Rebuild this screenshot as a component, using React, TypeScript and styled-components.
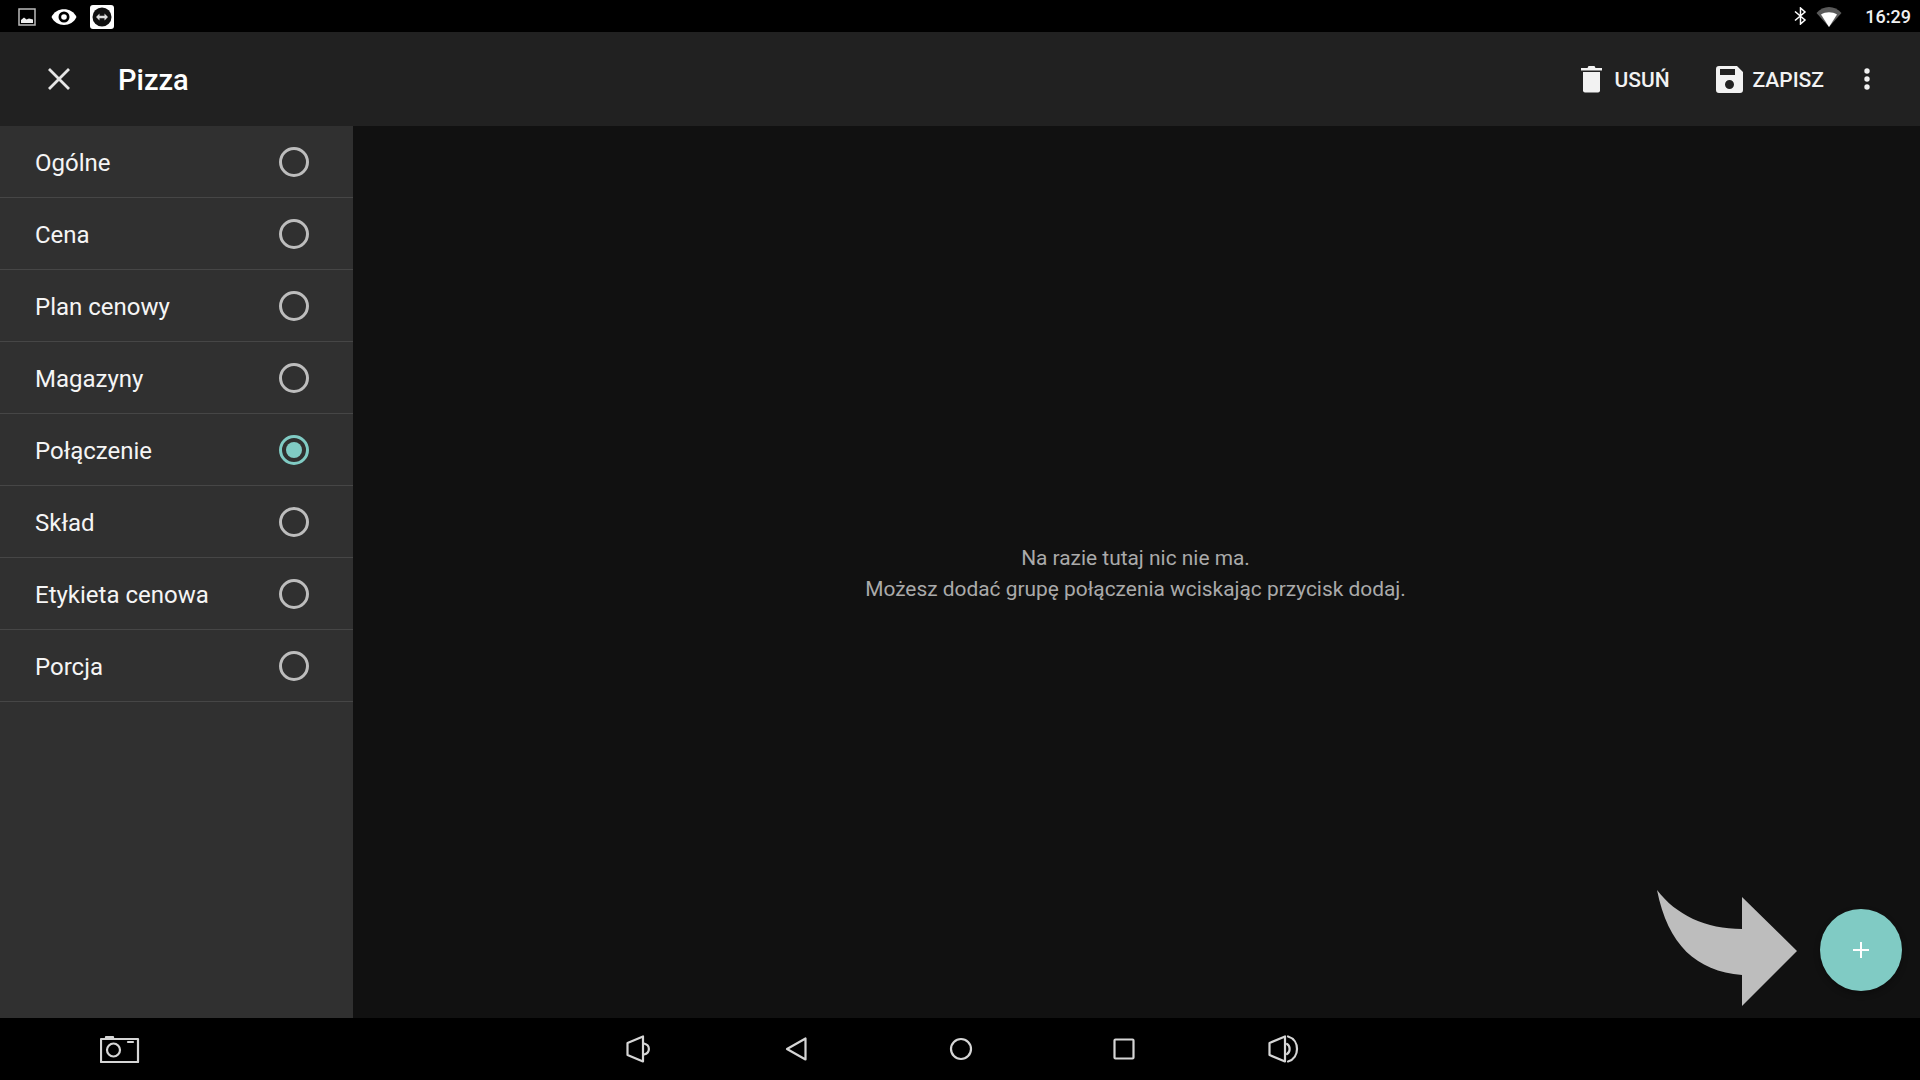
import styled, { createGlobalStyle } from "styled-components";

const GlobalStyle = createGlobalStyle`
  html, body {
    margin: 0;
    padding: 0;
    background: #000;
    font-family: Roboto, "Liberation Sans", sans-serif;
  }
`;

const SECTIONS = ["Ogólne", "Cena", "Plan cenowy", "Magazyny", "Połączenie", "Skład", "Etykieta cenowa", "Porcja"];
const ACTIVE_SECTION = "Połączenie";

const App = () => {
  return (
    <Screen>
      <GlobalStyle />
      <StatusBar>
        <NotificationIcons>
          <PictureIcon />
          <EyeIcon />
          <RemoteIcon />
        </NotificationIcons>
        <SystemIcons>
          <BluetoothIcon />
          <WifiIcon />
          <Clock>16:29</Clock>
        </SystemIcons>
      </StatusBar>

      <Toolbar>
        <CloseIcon />
        <Title>Pizza</Title>
        <Spacer />
        <ActionButton $gap={12}>
          <TrashIcon />
          <ActionLabel>USUŃ</ActionLabel>
        </ActionButton>
        <ActionButton $gap={10}>
          <SaveIcon />
          <ActionLabel>ZAPISZ</ActionLabel>
        </ActionButton>
        <MoreIcon />
      </Toolbar>

      <Body>
        <Sidebar>
          {SECTIONS.map(name => (
            <Row key={name}>
              <RowLabel>{name}</RowLabel>
              <Radio $checked={name === ACTIVE_SECTION} />
            </Row>
          ))}
        </Sidebar>
        <Main>
          <EmptyText>
            Na razie tutaj nic nie ma.
            <br />
            Możesz dodać grupę połączenia wciskając przycisk dodaj.
          </EmptyText>
          <HintArrow viewBox="0 0 142 118" width="142" height="118">
            <path d="M1 1 C 20 26 50 40 86 40 L86 8 L141 62 L86 117 L86 86 C 40 82 12 56 1 1 Z" fill="#bdbdbd" />
          </HintArrow>
          <Fab>
            <svg viewBox="0 0 16 16" width="16" height="16">
              <path d="M8 0V16M0 8H16" stroke="#fff" strokeWidth="2" fill="none" />
            </svg>
          </Fab>
        </Main>
      </Body>

      <NavBar>
        <NavIcon $left={100} viewBox="0 0 40 28" width="40" height="28">
          <rect x="1" y="4" width="37" height="23" />
          <path d="M6 3.5V2H13V3.5" />
          <circle cx="13.5" cy="15" r="6.5" />
          <path d="M28 7H33" />
        </NavIcon>
        <NavIcon $left={486} viewBox="0 0 26 28" width="26" height="28">
          <path d="M1.5 8L17 1.5V26.5L1.5 20Z" />
          <path d="M18 8.5C24.5 10 24.5 18 18 19.5" />
        </NavIcon>
        <NavIcon $left={133} viewBox="0 0 22 24" width="22" height="24">
          <path d="M2 12L20.5 1.5V22.5Z" />
        </NavIcon>
        <NavIcon $left={142} viewBox="0 0 24 24" width="24" height="24">
          <circle cx="12" cy="12" r="10" />
        </NavIcon>
        <NavIcon $left={140} viewBox="0 0 22 22" width="22" height="22">
          <rect x="1.5" y="1.5" width="19" height="19" rx="1" />
        </NavIcon>
        <NavIcon $left={133} viewBox="0 0 32 28" width="32" height="28">
          <path d="M1.5 8L17 1.5V26.5L1.5 20Z" />
          <path d="M19 9C22.5 11 22.5 17 19 19" />
          <path d="M20 1.5C32 5 32 23 20 26.5" />
        </NavIcon>
      </NavBar>
    </Screen>
  );
};

export default App;

const PictureIcon = () => (
  <svg viewBox="0 0 18 18" width="18" height="18">
    <rect x="1" y="1" width="16" height="16" fill="none" stroke="#bbb" strokeWidth="1.5" />
    <path d="M3 15V12L6 9.5L8.5 11.5L11 10.5L15 11.5V15Z" fill="#eee" />
  </svg>
);

const EyeIcon = () => (
  <EyeSvg viewBox="0 0 26 16" width="26" height="16">
    <path d="M0.5 8C5 -2.5 21 -2.5 25.5 8C21 18.5 5 18.5 0.5 8Z" fill="#fff" />
    <circle cx="13" cy="8" r="5.5" fill="#000" />
    <circle cx="13" cy="8" r="2.8" fill="#fff" />
  </EyeSvg>
);

const RemoteIcon = () => (
  <svg viewBox="0 0 24 24" width="24" height="24">
    <rect width="24" height="24" rx="3" fill="#fff" />
    <circle cx="12" cy="12" r="9.5" fill="#111" />
    <path d="M6 12L9.5 8.5V10.8H14.5V8.5L18 12L14.5 15.5V13.2H9.5V15.5Z" fill="#ddd" />
  </svg>
);

const BluetoothIcon = () => (
  <svg viewBox="0 0 13 18" width="13" height="18">
    <path d="M1 4.5L11 13L6.5 17V1L11 5L1 13.5" fill="none" stroke="#fff" strokeWidth="1.5" />
  </svg>
);

const WifiIcon = () => (
  <svg viewBox="0 0 26 21" width="26" height="21">
    <path d="M0.5 7C7 -1 19 -1 25.5 7L13 21Z" fill="#5a5a5a" />
    <path d="M5 8.5C9.5 5.5 16.5 5.5 21 8.5L13 21Z" fill="#fff" />
  </svg>
);

const CloseIcon = () => (
  <CloseSvg viewBox="0 0 24 24" width="24" height="24">
    <path d="M2 2L22 22M22 2L2 22" stroke="#e6e6e6" strokeWidth="2.8" fill="none" />
  </CloseSvg>
);

const TrashIcon = () => (
  <svg viewBox="0 0 21 28" width="21" height="28">
    <path d="M0 3H6.5L7.5 1H13.5L14.5 3H21V5.5H0Z" fill="#f2f2f2" />
    <path d="M2 7H19V25.5A2 2 0 0 1 17 27.5H4A2 2 0 0 1 2 25.5Z" fill="#f2f2f2" />
  </svg>
);

const SaveIcon = () => (
  <svg viewBox="0 0 27 27" width="27" height="27">
    <path
      fillRule="evenodd"
      d="M3 0H21L27 6V24A3 3 0 0 1 24 27H3A3 3 0 0 1 0 24V3A3 3 0 0 1 3 0ZM4 3V9H19V3ZM13.5 14A4.5 4.5 0 1 0 13.5 23A4.5 4.5 0 1 0 13.5 14Z"
      fill="#f2f2f2"
    />
  </svg>
);

const MoreIcon = () => (
  <MoreSvg viewBox="0 0 6 22" width="6" height="22">
    <circle cx="3" cy="3" r="2.7" fill="#f2f2f2" />
    <circle cx="3" cy="11" r="2.7" fill="#f2f2f2" />
    <circle cx="3" cy="19" r="2.7" fill="#f2f2f2" />
  </MoreSvg>
);

const Screen = styled.div`
  width: 1920px;
  height: 1080px;
  display: flex;
  flex-direction: column;
  overflow: hidden;
  background: #000;
`;

const StatusBar = styled.div`
  height: 32px;
  flex: none;
  display: flex;
  align-items: center;
  justify-content: space-between;
  padding: 0 9px 0 18px;
  background: #000;
`;

const NotificationIcons = styled.div`
  display: flex;
  align-items: center;
  gap: 14px;
  padding-top: 1px;
`;

const EyeSvg = styled.svg`
  margin: 0 -1px 0 1px;
`;

const SystemIcons = styled.div`
  display: flex;
  align-items: center;
  gap: 9px;
`;

const Clock = styled.span`
  color: #f0f0f0;
  font-size: 18px;
  font-weight: 500;
  margin-left: 14px;
`;

const Toolbar = styled.div`
  height: 94px;
  flex: none;
  display: flex;
  align-items: center;
  padding: 0 50px 0 47px;
  background: #212121;
`;

const CloseSvg = styled.svg`
  margin-right: 47px;
`;

const MoreSvg = styled.svg`
  margin-left: 40px;
`;

const Title = styled.div`
  color: #fff;
  font-size: 29px;
  font-weight: 500;
  padding-top: 2px;
`;

const Spacer = styled.div`
  flex: 1;
`;

const ActionButton = styled.div<{ $gap: number }>`
  display: flex;
  align-items: center;
  gap: ${props => props.$gap}px;
  margin-left: 46px;
`;

const ActionLabel = styled.span`
  color: #f2f2f2;
  font-size: 21px;
  font-weight: 500;
  padding-top: 2px;
`;

const Body = styled.div`
  flex: 1;
  display: flex;
  min-height: 0;
`;

const Sidebar = styled.div`
  width: 353px;
  flex: none;
  background: #303030;
`;

const Row = styled.div`
  height: 72px;
  box-sizing: border-box;
  display: flex;
  align-items: center;
  justify-content: space-between;
  padding: 0 44px 0 35px;
  border-bottom: 1px solid #464646;
`;

const RowLabel = styled.span`
  color: #f5f5f5;
  font-size: 24px;
  padding-top: 2px;
`;

const Radio = styled.div<{ $checked: boolean }>`
  width: 30px;
  height: 30px;
  box-sizing: border-box;
  border-radius: 50%;
  border: 3px solid ${props => (props.$checked ? "#80cbc4" : "#bdbdbd")};
  display: flex;
  align-items: center;
  justify-content: center;

  &::after {
    content: "";
    display: ${props => (props.$checked ? "block" : "none")};
    width: 16px;
    height: 16px;
    border-radius: 50%;
    background: #80cbc4;
  }
`;

const Main = styled.div`
  flex: 1;
  position: relative;
  display: flex;
  align-items: center;
  justify-content: center;
  background: #111;
`;

const EmptyText = styled.div`
  color: #aaa;
  font-size: 20.9px;
  line-height: 31px;
  text-align: center;
  padding: 3px 2px 0 0;
`;

const HintArrow = styled.svg`
  position: absolute;
  left: 1303px;
  top: 763px;
`;

const Fab = styled.div`
  position: absolute;
  right: 18px;
  bottom: 27px;
  width: 82px;
  height: 82px;
  border-radius: 50%;
  display: flex;
  align-items: center;
  justify-content: center;
  background: #80cbc4;
  box-shadow: 0 3px 6px rgba(0, 0, 0, 0.3);
`;

const NavBar = styled.div`
  height: 62px;
  flex: none;
  display: flex;
  align-items: center;
  background: #000;
`;

const NavIcon = styled.svg<{ $left: number }>`
  flex: none;
  margin-left: ${props => props.$left}px;
  fill: none;
  stroke: #d6d6d6;
  stroke-width: 2.2;
  stroke-linejoin: round;
  stroke-linecap: round;
`;
